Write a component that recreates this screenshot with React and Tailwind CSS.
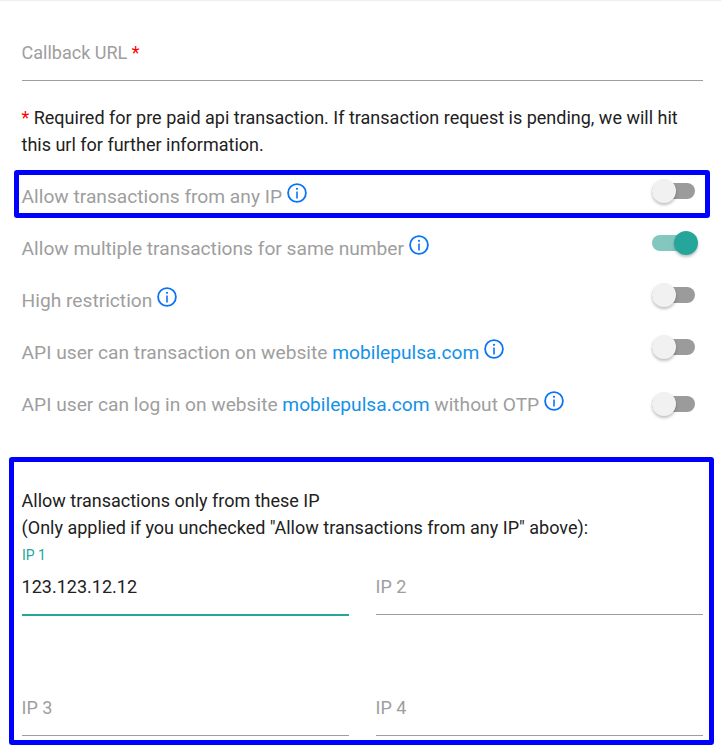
const GREY = "text-[#9e9e9e]";

function InfoIcon() {
  return (
    <svg className="mt-px size-5 shrink-0" viewBox="0 0 20 20" fill="none" stroke="#0a74f5" aria-hidden="true">
      <circle cx="10" cy="10" r="8.9" strokeWidth="1.8" />
      <circle cx="10" cy="5.8" r="1.1" fill="#0a74f5" stroke="none" />
      <path d="M10 8.4v7" strokeWidth="1.6" />
    </svg>
  );
}

function Switch({ on }) {
  return (
    <span className="flex h-6 w-[46px] shrink-0 items-center" role="switch" aria-checked={!!on}>
      <span className={`flex h-4 w-[43px] items-center rounded-full ${on ? "bg-[#84c7c1]" : "bg-[#9b9b9b]"}`}>
        <span
          className={`size-6 shrink-0 rounded-full shadow-[0_2px_3px_rgba(0,0,0,0.25)] ${on ? "ml-[22px] bg-[#26a69a]" : "bg-[#f1f1f1]"}`}
        />
      </span>
    </span>
  );
}

function SettingRow({ children, on, last }) {
  return (
    <div className="flex h-[52px] items-start justify-between pl-[21.6px] pr-[23px]">
      <div className={`flex items-start gap-[4.5px] text-[19.18px] leading-7 ${GREY}`}>
        <span className="whitespace-nowrap pt-px">{children}</span>
        <InfoIcon />
      </div>
      <div className={last ? "pt-0.5" : "-mt-[3px]"}>
        <Switch on={on} />
      </div>
    </div>
  );
}

function SiteLink() {
  return <a className="text-[#1492e6]">mobilepulsa.com</a>;
}

function IpField({ label, value }) {
  return (
    <div className="flex h-[121px] flex-col">
      <div className="h-6 pt-1 text-[14px] leading-5 text-[#26a69a]">{value ? label : ""}</div>
      <div className={`h-[50px] border-b pt-2 text-[18px] leading-[27px] ${value ? "border-[#26a69a] text-[#212121] shadow-[0_1px_0_0_#26a69a]" : "border-[#9e9e9e] text-[#9e9e9e]"}`}>
        <span className="-ml-[0.4px]">{value || label}</span>
      </div>
    </div>
  );
}

export default function App() {
  return (
    <main className="h-[747px] w-[721px] overflow-hidden border-t border-[#eeeeee] bg-white font-[Roboto,sans-serif] text-[18px] leading-[27px] text-[#212121]">
      <div className="ml-[22px] mr-[18px] h-20 border-b border-[#9e9e9e] pt-[38px] text-[#9e9e9e]">
        <span className="-ml-[0.4px]">Callback URL</span> <span className="text-[#ff0000]">*</span>
      </div>
      <p className="ml-[21.5px] mt-[23px] w-[670px]">
        <span className="text-[#ff0000]">*</span> Required for pre paid api transaction. If transaction request is
        pending, we will hit this url for further information.
      </p>
      <section className="mt-3 ml-[14px] mr-[11px] h-12 rounded-[3px] border-5 border-[#0000ff] pt-[7px]">
        <div className="-ml-[19px] -mr-[16px]">
          <SettingRow>Allow transactions from any IP</SettingRow>
        </div>
      </section>
      <section className="mt-4">
        <SettingRow on>Allow multiple transactions for same number</SettingRow>
        <SettingRow>High restriction</SettingRow>
        <SettingRow>
          API user can transaction on website <SiteLink />
        </SettingRow>
        <SettingRow last>
          API user can log in on website <SiteLink /> without OTP
        </SettingRow>
      </section>
      <section className="ml-[9px] mr-[7px] mt-[15px] h-[288px] overflow-hidden rounded-[3px] border-5 border-[#0000ff] pl-2 pr-[6px] pt-[25px]">
        <p className="-ml-[0.4px]">
          Allow transactions only from these IP
          <br />
          (Only applied if you unchecked "Allow transactions from any IP" above):
        </p>
        <div className="grid grid-cols-2 gap-x-[27px]">
          <IpField label="IP 1" value="123.123.12.12" />
          <IpField label="IP 2" />
          <IpField label="IP 3" />
          <IpField label="IP 4" />
        </div>
      </section>
    </main>
  );
}
